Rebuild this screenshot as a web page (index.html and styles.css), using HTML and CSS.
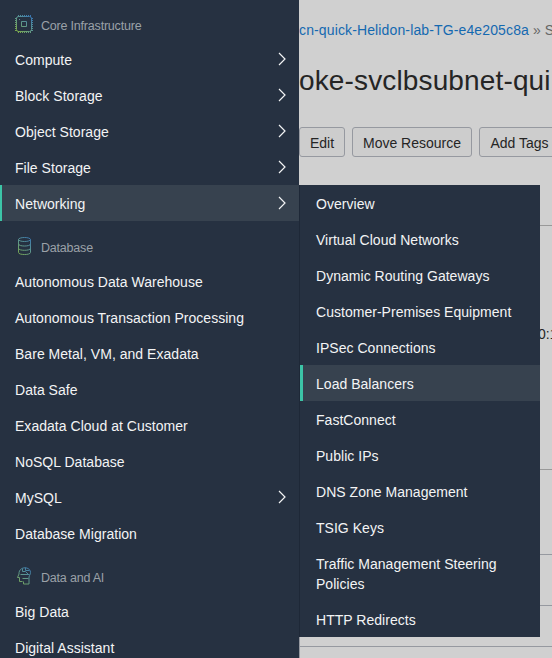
FILE: index.html
```html
<!DOCTYPE html>
<html lang="en">
<head>
<meta charset="utf-8">
<title>Networking</title>
<link rel="stylesheet" href="styles.css">
</head>
<body>
<div class="app">
  <nav class="sidebar">
    <h2 class="group"><svg class="icon" viewBox="0 0 20 20"><defs><linearGradient id="g" gradientUnits="userSpaceOnUse" x1="3" y1="18" x2="17" y2="2"><stop offset="0" stop-color="#8bbd4b"/><stop offset=".5" stop-color="#68a99b"/><stop offset="1" stop-color="#3c82c6"/></linearGradient></defs><g fill="none" stroke="url(#g)"><rect x="2.500" y="2.500" width="15" height="15" rx="2"/><path d="M7.500 7.500h5v5h-5zM5 5.500h1"/><path stroke-dasharray="1 1" stroke-width="2" d="M4 2h13M4 18h13M2 4v13M18 4v13"/></g></svg><span>Core Infrastructure</span></h2>
    <a class="item"><span>Compute</span><svg class="chev" viewBox="0 0 8 14"><path d="M1 1l6 6-6 6"/></svg></a>
    <a class="item"><span>Block Storage</span><svg class="chev" viewBox="0 0 8 14"><path d="M1 1l6 6-6 6"/></svg></a>
    <a class="item"><span>Object Storage</span><svg class="chev" viewBox="0 0 8 14"><path d="M1 1l6 6-6 6"/></svg></a>
    <a class="item"><span>File Storage</span><svg class="chev" viewBox="0 0 8 14"><path d="M1 1l6 6-6 6"/></svg></a>
    <a class="item active"><span>Networking</span><svg class="chev" viewBox="0 0 8 14"><path d="M1 1l6 6-6 6"/></svg></a>
    <h2 class="group"><svg class="icon" viewBox="0 0 20 20"><g fill="none" stroke="url(#g)"><ellipse cx="10.500" cy="3.500" rx="6" ry="2"/><path d="M4.500 3.500v13c0 2.700 12 2.700 12 0v-13M4.500 8c0 2.700 12 2.700 12 0M4.500 12.300c0 2.700 12 2.700 12 0"/></g></svg><span>Database</span></h2>
    <a class="item">Autonomous Data Warehouse</a>
    <a class="item">Autonomous Transaction Processing</a>
    <a class="item">Bare Metal, VM, and Exadata</a>
    <a class="item">Data Safe</a>
    <a class="item">Exadata Cloud at Customer</a>
    <a class="item">NoSQL Database</a>
    <a class="item"><span>MySQL</span><svg class="chev" viewBox="0 0 8 14"><path d="M1 1l6 6-6 6"/></svg></a>
    <a class="item">Database Migration</a>
    <h2 class="group"><svg class="icon" viewBox="0 0 20 20"><g fill="none" stroke="url(#g)"><path d="M8.500 15.500h-3v-4h-2l1.500-3.500C4.500 0 16.500 0 16.500 6.500c0 2-1 2.500-1.500 4.500v7H9.500v-2.500M8.500 2.500v3h3l3 3M11.500 1.500v3h4M6.500 8.500h9M8.500 12.500h6"/></g></svg><span>Data and AI</span></h2>
    <a class="item">Big Data</a>
    <a class="item">Digital Assistant</a>
  </nav>
  <main class="page">
    <div class="crumbs"><a class="link">cn-quick-Helidon-lab-TG-e4e205c8a</a><span>»</span><span>S</span></div>
    <h1 class="title">oke-svclbsubnet-qui</h1>
    <div class="buttons"><button class="btn edit">Edit</button><button class="btn move">Move Resource</button><button class="btn tags">Add Tags</button></div>
    <section class="details"><span>0:1</span></section>
    <section class="row gap"></section>
    <section class="row first"></section>
    <section class="row second"></section>
    <section class="row last"></section>
  </main>
  <nav class="submenu">
    <a class="item">Overview</a>
    <a class="item">Virtual Cloud Networks</a>
    <a class="item">Dynamic Routing Gateways</a>
    <a class="item">Customer-Premises Equipment</a>
    <a class="item">IPSec Connections</a>
    <a class="item active">Load Balancers</a>
    <a class="item">FastConnect</a>
    <a class="item">Public IPs</a>
    <a class="item">DNS Zone Management</a>
    <a class="item">TSIG Keys</a>
    <a class="item">Traffic Management Steering Policies</a>
    <a class="item">HTTP Redirects</a>
  </nav>
</div>
</body>
</html>
```
FILE: styles.css
```css
* { box-sizing: border-box; }
body { margin: 0; font-family: "Liberation Sans", Arial, sans-serif; font-size: 14px; color: #252525; overflow: hidden; }
.app { position: relative; display: flex; width: 552px; height: 658px; overflow: hidden; background: #d0d0d0; }
.sidebar { flex: 0 0 299px; background: #263141; padding-top: 7px; overflow: hidden; height: 658px; }
.group { display: flex; align-items: center; gap: 7px; margin: 0; height: 42px; padding: 8px 0 0 14px; font-size: 12.500px; font-weight: 400; letter-spacing: -.2px; color: #9ba1a8; }
.group span { margin-top: 4px; }
.sidebar .group:first-child { height: 34px; padding-top: 0; }
.icon { width: 20px; height: 20px; opacity: .85; }
.item { display: flex; justify-content: space-between; align-items: center; min-height: 36px; padding: 9px 13px 7px 15px; line-height: 20px; color: #f3f4f5; letter-spacing: .03px; }
.item.active { background: #37424f; box-shadow: inset 2px 0 #3cc4a7; }
.chev { width: 8px; height: 14px; margin-top: -2px; fill: none; stroke: #f3f4f5; stroke-width: 1.200; }
.page { flex: 1; min-width: 0; overflow: hidden; white-space: nowrap; }
.crumbs { display: flex; gap: 4px; padding-top: 20px; line-height: 20px; color: #666; }
.link { color: #1469b0; letter-spacing: .13px; }
.title { margin: 21px 0 0; font-size: 28px; line-height: 40px; font-weight: 400; letter-spacing: .14px; }
.buttons { display: flex; gap: 7px; margin-top: 26px; }
.btn { flex: none; height: 30px; padding: 2px 0 0; font: inherit; color: #252525; background: #cdcdcd; border: 1px solid #9699a0; border-radius: 3px; }
.edit { width: 46px; }
.move { width: 120px; }
.tags { width: 81px; }
.details { margin-top: 68px; height: 245px; border-top: 1px solid #999; border-bottom: 1px solid #999; padding: 98px 0 0 239px; line-height: 20px; }
.row { border-bottom: 1px solid #9699a0; }
.gap { height: 85px; }
.first { height: 51px; }
.second { height: 41px; border-left: 1px solid #9699a0; }
.last { height: 20px; border-left: 1px solid #9699a0; }
.submenu { position: absolute; left: 299px; top: 185px; width: 241px; height: 452px; background: #263141; border-left: 1px solid #1e2837; }
.submenu .item { padding: 9px 16px 7px; }
.submenu .item.active { box-shadow: inset 3px 0 #3cc4a7; }
```
